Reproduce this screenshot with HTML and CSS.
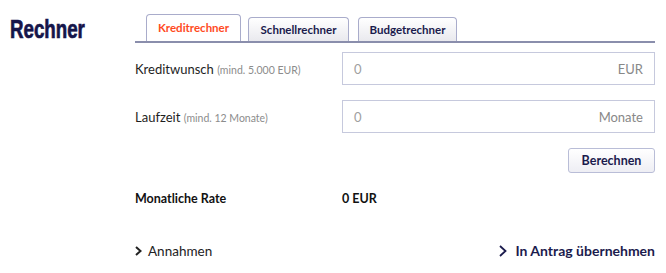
FILE: index.html
```html
<!DOCTYPE html>
<html lang="de">
<head>
<meta charset="utf-8">
<title>Rechner</title>
<link rel="stylesheet" href="styles.css">
</head>
<body>
<div class="page">
  <div class="side">
    <h1 class="title">Rechner</h1>
  </div>
  <div class="calc">
    <div class="tabs">
      <div class="tab active">Kreditrechner</div>
      <div class="tab">Schnellrechner</div>
      <div class="tab">Budgetrechner</div>
    </div>
    <div class="form">
      <div class="row">
        <div class="label">Kreditwunsch <span class="hint">(mind. 5.000 EUR)</span></div>
        <div class="field"><span class="value">0</span><span class="unit">EUR</span></div>
      </div>
      <div class="row">
        <div class="label">Laufzeit <span class="hint">(mind. 12 Monate)</span></div>
        <div class="field"><span class="value">0</span><span class="unit">Monate</span></div>
      </div>
      <div class="actions">
        <button class="btn" type="button">Berechnen</button>
      </div>
      <div class="result">
        <div class="result-label">Monatliche Rate</div>
        <div class="result-value">0 EUR</div>
      </div>
      <div class="footer">
        <a class="link" href="#"><svg class="chev" width="7" height="10" viewBox="0 0 7 10"><path d="M1 1 L5.5 5 L1 9" fill="none" stroke="currentColor" stroke-width="2"/></svg>Annahmen</a>
        <a class="link strong" href="#"><svg class="chev big" width="8" height="12" viewBox="0 0 8 12"><path d="M1 1 L6.5 6 L1 11" fill="none" stroke="currentColor" stroke-width="1.8"/></svg>In Antrag übernehmen</a>
      </div>
    </div>
  </div>
</div>
</body>
</html>
```

FILE: styles.css
```css
html, body {
  margin: 0;
  padding: 0;
  background: #ffffff;
}

body {
  font-family: "Lato", "Open Sans", sans-serif;
  color: #222222;
  font-size: 13px;
}

.page {
  display: flex;
  padding-left: 10px;
}

.side {
  width: 125px;
}

.title {
  margin: 14px 0 0 0;
  font-family: "Liberation Sans", sans-serif;
  font-weight: 700;
  font-size: 26px;
  line-height: 30px;
  color: #15154a;
  -webkit-text-stroke: 0.7px #15154a;
  transform: scaleX(0.72);
  transform-origin: left center;
  white-space: nowrap;
}

.calc {
  width: 520px;
}

.tabs {
  display: flex;
  align-items: flex-end;
  margin-top: 14px;
  padding-left: 11px;
  border-bottom: 2px solid #8a8eac;
  height: 27px;
}

.tab {
  box-sizing: border-box;
  height: 24px;
  padding: 0 12px;
  margin-right: 7px;
  display: flex;
  align-items: center;
  justify-content: center;
  border: 1px solid #a9accb;
  border-bottom: none;
  border-radius: 4px 4px 0 0;
  background: linear-gradient(#ffffff, #e9e9ee);
  font-weight: 700;
  font-size: 11.5px;
  color: #1b1b4d;
}

.tab:nth-child(1) { width: 95px; }
.tab:nth-child(2) { width: 101px; margin-right: 9px; }
.tab:nth-child(3) { width: 99px; }

.tab.active {
  height: 27px;
  background: #ffffff;
  color: #ff4b1f;
  padding-bottom: 2px;
}

.form {
  padding-top: 9px;
}

.row {
  display: flex;
  align-items: center;
  margin-bottom: 15px;
}

.label {
  width: 207px;
  font-size: 13px;
  color: #1e1e1e;
}

.hint {
  font-size: 10.5px;
  color: #8c8c8c;
}

.field {
  box-sizing: border-box;
  width: 313px;
  height: 33px;
  border: 1px solid #c6c9dd;
  display: flex;
  align-items: center;
  justify-content: space-between;
  padding: 0 11px 0 11px;
  color: #a0a0a0;
  font-size: 13px;
}

.unit {
  color: #888888;
}

.actions {
  display: flex;
  justify-content: flex-end;
  margin-top: 1px;
}

.btn {
  box-sizing: border-box;
  width: 87px;
  height: 25px;
  border: 1px solid #b9bdd7;
  border-radius: 3px;
  background: linear-gradient(#ffffff, #eeeef4);
  font-family: "Lato", "Open Sans", sans-serif;
  font-weight: 700;
  font-size: 12.5px;
  color: #1b1b4d;
  padding: 0;
}

.result {
  display: flex;
  margin-top: 18px;
  font-weight: 700;
  font-size: 12.5px;
  color: #111111;
  line-height: 16px;
}

.result-label {
  width: 207px;
}

.footer {
  display: flex;
  justify-content: space-between;
  margin-top: 36px;
  line-height: 16px;
}

.link {
  display: flex;
  align-items: center;
  text-decoration: none;
  color: #222222;
  font-size: 13.5px;
}

.link.strong {
  color: #1b1b4d;
  font-weight: 700;
  font-size: 14px;
}

.chev {
  margin-right: 6px;
}

.chev.big {
  margin-right: 8px;
}
```
